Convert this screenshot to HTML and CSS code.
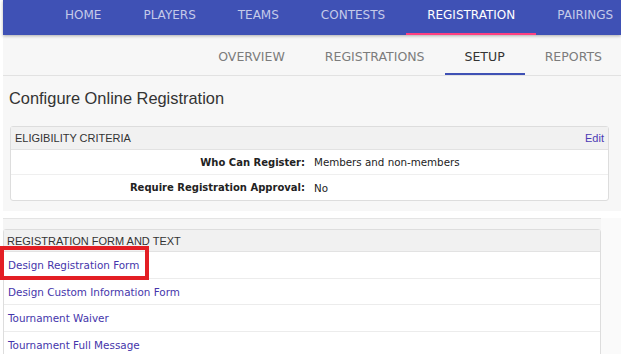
FILE: index.html
```html
<!DOCTYPE html>
<html lang="en">
<head>
  <meta charset="UTF-8" />
  <title>Tournament | Registration Setup</title>
  <link rel="stylesheet" href="styles.css">
</head>
<body>
  <div class="page">
    <!-- Main navigation -->
    <header class="topnav">
      <a href="#">HOME</a>
      <a href="#">PLAYERS</a>
      <a href="#">TEAMS</a>
      <a href="#">CONTESTS</a>
      <a href="#" class="active">REGISTRATION</a>
      <a href="#">PAIRINGS</a>
    </header>

    <!-- Registration sub navigation -->
    <nav class="subnav">
      <a href="#">OVERVIEW</a>
      <a href="#">REGISTRATIONS</a>
      <a href="#" class="active">SETUP</a>
      <a href="#">REPORTS</a>
    </nav>

    <main class="content">
      <h1>Configure Online Registration</h1>

      <section class="panel panel-elig">
        <div class="panel-head">
          <span>ELIGIBILITY CRITERIA</span>
          <a href="#" class="edit">Edit</a>
        </div>
        <div class="field">
          <span class="field-label">Who Can Register:</span>
          <span class="field-value">Members and non-members</span>
        </div>
        <div class="field">
          <span class="field-label">Require Registration Approval:</span>
          <span class="field-value">No</span>
        </div>
      </section>
    </main>

    <div class="band"></div>

    <div class="lower">
      <div class="lower-main">
        <section class="panel panel-form">
          <div class="panel-head">
            <span>REGISTRATION FORM AND TEXT</span>
          </div>
          <div class="link-row">
            <a href="#">Design Registration Form</a>
            <span class="highlight"></span>
          </div>
          <div class="link-row"><a href="#">Design Custom Information Form</a></div>
          <div class="link-row"><a href="#">Tournament Waiver</a></div>
          <div class="link-row"><a href="#">Tournament Full Message</a></div>
        </section>
      </div>
      <div class="lower-side"></div>
    </div>
  </div>
</body>
</html>
```

FILE: styles.css
```css
* {
  box-sizing: border-box; margin: 0; padding: 0;
}
body {
  background: #fff;
  color: #222;
  font-family: 'Liberation Sans', Arial, sans-serif;
  overflow: hidden;
}
a {
  text-decoration: none;
}
.page {
  margin-left: 3px;
  background: #f7f7f7;
  min-height: 100vh;
}

/* top bar */
.topnav {
  display: flex;
  height: 35px;
  padding-left: 41px;
  background: #3f51b5;
  white-space: nowrap;
  overflow: hidden;
  box-shadow: 0 1px 3px rgba(0,0,0,0.3);
  position: relative;
  z-index: 1;
}
.topnav a {
  display: flex;
  align-items: center;
  padding: 0 21px 5px;
  font-family: 'DejaVu Sans', sans-serif;
  font-size: 12px;
  color: #c5cae9;
}
.topnav a.active {
  color: #fff;
  box-shadow: inset 0 -2px #ff4081;
}

/* sub bar */
.subnav {
  display: flex;
  justify-content: flex-end;
  height: 41px;
  padding-top: 2px;
  padding-right: 1px;
  background: #f7f7f7;
  border-bottom: 1px solid #e2e2e2;
  white-space: nowrap;
}
.subnav a {
  display: flex;
  align-items: center;
  padding: 0 20px;
  font-family: 'DejaVu Sans', sans-serif;
  font-size: 12.5px;
  color: #7c7c7c;
}
.subnav a:last-child {
  padding-right: 18px;
}
.subnav a.active {
  color: #333;
  box-shadow: inset 0 -2px #3f51b5;
}

.content {
  padding: 0 0 10px 6px;
}
h1 {
  font-size: 16.4px;
  font-weight: 400;
  line-height: 20px;
  color: #333;
  margin: 12px 0 18px;
}

/* panels */
.panel {
  background: #fff;
  border: 1px solid #ddd;
  border-radius: 3px;
}
.panel-head {
  display: flex;
  justify-content: space-between;
  align-items: center;
  background: #f1f1f1;
  border-bottom: 1px solid #e2e2e2;
  font-size: 11px;
  color: #333;
}
.panel-elig {
  width: 599px;
  margin-left: 1px;
}
.panel-elig .panel-head {
  height: 23px;
  padding: 0 4px;
}
.edit {
  color: #4b3bb5;
}
.field {
  display: grid;
  grid-template-columns: 294px 1fr;
  height: 25px;
  align-items: center;
  font-family: 'DejaVu Sans', sans-serif;
  font-size: 10.3px;
  color: #222;
  border-bottom: 1px solid #efefef;
}
.field:last-child {
  border-bottom: none;
}
.field-label {
  text-align: right;
  font-weight: 700;
  font-size: 10px;
}
.field-value {
  padding-left: 9px;
}

.band {
  height: 7px;
  background: #fff;
  margin-left: -3px;
}
.lower {
  display: flex;
  min-height: 200px;
}
.lower-main {
  width: 598px;
  background: #f5f5f5;
  border-top: 1px solid #e4e4e4;
  padding-top: 10px;
}
.lower-side {
  flex: 1;
  background: #fafafa;
}
.panel-form {
  border-radius: 3px 3px 0 0;
}
.panel-form .panel-head {
  height: 22px;
  padding: 0 3px;
}
.link-row {
  position: relative;
  display: flex;
  align-items: center;
  height: 26.5px;
  padding-left: 4px;
  padding-top: 1px;
  border-bottom: 1px solid #ececec;
}
.link-row a {
  font-family: 'DejaVu Sans', sans-serif;
  font-size: 10.4px;
  color: #4535ab;
}

/* red annotation box */
.highlight {
  position: absolute;
  left: -4px;
  top: -6px;
  width: 149px;
  height: 34px;
  border: 4px solid #e31e24;
}
```
